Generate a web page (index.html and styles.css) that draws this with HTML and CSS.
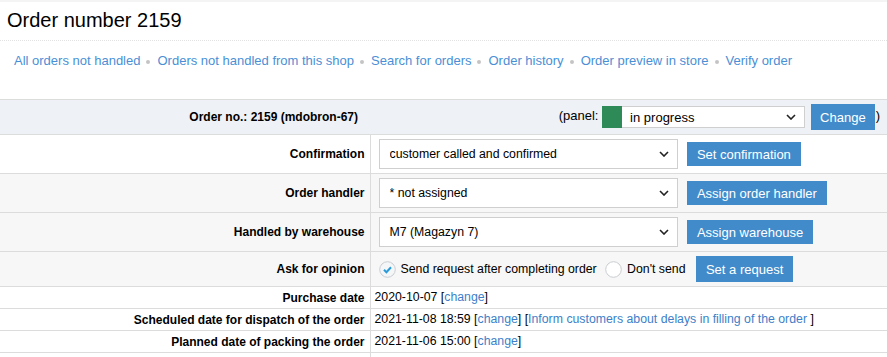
FILE: index.html
```html
<!DOCTYPE html>
<html lang="en">
<head>
    <meta charset="UTF-8">
    <title>Order number 2159</title>
    <link rel="stylesheet" href="styles.css">
</head>
<body>

<h1 class="page-title">Order number 2159</h1>

<nav class="order-links"><a href="#">All orders not handled</a><span class="sep"></span><a href="#">Orders not handled from this shop</a><span class="sep"></span><a href="#">Search for orders</a><span class="sep"></span><a href="#">Order history</a><span class="sep"></span><a href="#">Order preview in store</a><span class="sep"></span><a href="#">Verify order</a></nav>

<table class="order">
    <colgroup>
        <col class="col-label">
        <col>
    </colgroup>
    <tr class="head">
        <th class="label head-label">Order no.: 2159 (mdobron-67)</th>
        <th class="head-panel">(panel: <span class="panel-color"></span><span class="select-wrap panel-select"><select><option>in progress</option></select><svg class="chevron" width="10" height="6" viewBox="0 0 10 6"><path d="M1 1l4 4 4-4" fill="none" stroke="#222" stroke-width="1.6"/></svg></span><button class="btn btn-tall">Change</button>)</th>
    </tr>
    <tr>
        <th class="label">Confirmation</th>
        <td class="field">
            <span class="select-wrap">
                <select><option>customer called and confirmed</option></select>
                <svg class="chevron" width="10" height="6" viewBox="0 0 10 6"><path d="M1 1l4 4 4-4" fill="none" stroke="#222" stroke-width="1.6"/></svg>
            </span>
            <button class="btn">Set confirmation</button>
        </td>
    </tr>
    <tr class="grey">
        <th class="label">Order handler</th>
        <td class="field">
            <span class="select-wrap">
                <select><option>* not assigned</option></select>
                <svg class="chevron" width="10" height="6" viewBox="0 0 10 6"><path d="M1 1l4 4 4-4" fill="none" stroke="#222" stroke-width="1.6"/></svg>
            </span>
            <button class="btn">Assign order handler</button>
        </td>
    </tr>
    <tr class="grey">
        <th class="label">Handled by warehouse</th>
        <td class="field">
            <span class="select-wrap">
                <select><option>M7 (Magazyn 7)</option></select>
                <svg class="chevron" width="10" height="6" viewBox="0 0 10 6"><path d="M1 1l4 4 4-4" fill="none" stroke="#222" stroke-width="1.6"/></svg>
            </span>
            <button class="btn">Assign warehouse</button>
        </td>
    </tr>
    <tr class="grey">
        <th class="label">Ask for opinion</th>
        <td class="field opinion">
            <label class="radio">
                <svg width="17" height="17" viewBox="0 0 17 17"><circle cx="8.5" cy="8.5" r="7.8" fill="#f4f6f8" stroke="#c9cdd1"/><path d="M5 8.8l2.4 2.4 4.6-5" fill="none" stroke="#2a9bd8" stroke-width="2"/></svg>
                Send request after completing order
            </label>
            <label class="radio">
                <svg width="17" height="17" viewBox="0 0 17 17"><circle cx="8.5" cy="8.5" r="7.8" fill="#fff" stroke="#c9cdd1"/></svg>
                Don't send
            </label>
            <button class="btn btn-tall">Set a request</button>
        </td>
    </tr>
    <tr>
        <th class="label">Purchase date</th>
        <td class="text">2020-10-07 [<a href="#">change</a>]</td>
    </tr>
    <tr>
        <th class="label">Scheduled date for dispatch of the order</th>
        <td class="text">2021-11-08 18:59 [<a href="#">change</a>] [<a href="#">Inform customers about delays in filling of the order </a>]</td>
    </tr>
    <tr>
        <th class="label">Planned date of packing the order</th>
        <td class="text">2021-11-06 15:00 [<a href="#">change</a>]</td>
    </tr>
    <tr>
        <th class="label">&nbsp;</th>
        <td class="text">&nbsp;</td>
    </tr>
</table>

</body>
</html>
```

FILE: styles.css
```css
body {
    margin: 0;
    border-top: 2px solid #f4f4f4;
    font-family: "Liberation Sans", Arial, sans-serif;
    color: #000;
    background: #fff;
}
.page-title {
    margin: 0;
    padding: 6px 7px 8px;
    font-size: 20px;
    line-height: 24px;
    font-weight: normal;
    border-bottom: 1px dotted #e2e2e2;
}
.order-links {
    padding: 12px 14px 30px;
    font-size: 13px;
    line-height: 16px;
}
.order-links a {
    color: #4a8fd6;
    text-decoration: none;
}
.order-links .sep {
    display: inline-block;
    width: 4px;
    height: 4px;
    border-radius: 50%;
    background-color: #c4c4c4;
    vertical-align: middle;
    margin: 0 7px 0 6px;
}
.order {
    width: 100%;
    table-layout: fixed;
    border-collapse: collapse;
    font-size: 12.3px;
    border-top: 1px solid #dcdcdc;
}
.col-label {
    width: 370px;
}
.order th,
.order td {
    border-bottom: 1px solid #dcdcdc;
    vertical-align: middle;
}
.order .label {
    text-align: right;
    font-size: 12px;
    font-weight: bold;
    padding: 3px 5px 3px 0;
    border-right: 1px solid #dcdcdc;
    white-space: nowrap;
}
.order .head {
    background-color: #eef1f5;
}
.order .head th {
    height: 34px;
    padding: 0;
}
.order .head .head-label {
    border-right: none;
    padding-right: 12px;
}
.head-panel {
    text-align: right;
    font-weight: normal;
    font-size: 13px;
    padding-right: 7px !important;
    white-space: nowrap;
}
.grey {
    background-color: #f7f7f7;
}
.field {
    padding: 4px 8px;
    height: 30px;
    white-space: nowrap;
}
.text {
    padding: 3px 4px;
    line-height: 15px;
    white-space: nowrap;
}
.text a {
    color: #3d7fc9;
    text-decoration: none;
}
.select-wrap {
    position: relative;
    display: inline-block;
    vertical-align: middle;
}
.select-wrap select {
    appearance: none;
    -webkit-appearance: none;
    display: block;
    width: 299px;
    height: 30px;
    padding: 0 24px 0 10px;
    border: 1px solid #cfcfcf;
    border-radius: 0;
    background: #fff;
    font-family: "Liberation Sans", Arial, sans-serif;
    font-size: 12.3px;
    color: #000;
}
.select-wrap .chevron {
    position: absolute;
    right: 9px;
    top: 12px;
}
.panel-color {
    display: inline-block;
    width: 20px;
    height: 22px;
    vertical-align: middle;
    background-color: #2e8b57;
}
.panel-select select {
    width: 183px;
    height: 22px;
    padding-left: 8px;
    border-left: none;
    font-size: 13px;
}
.panel-select .chevron {
    top: 8px;
}
.btn {
    display: inline-block;
    vertical-align: middle;
    height: 24px;
    margin-left: 6px;
    padding: 0 10px;
    border: none;
    border-radius: 0;
    background-color: #428bca;
    color: #fff;
    font-family: "Liberation Sans", Arial, sans-serif;
    font-size: 13px;
    cursor: pointer;
}
.btn:hover {
    background-color: #3071a9;
}
.btn-tall {
    height: 26px;
}
.head-panel .btn {
    padding: 0 9px;
    margin-right: 1px;
}
.opinion {
    height: 26px;
}
.radio {
    display: inline-flex;
    align-items: center;
    gap: 5px;
    margin-right: 5px;
    vertical-align: middle;
}
.opinion .btn {
    margin-left: 2px;
}
```
